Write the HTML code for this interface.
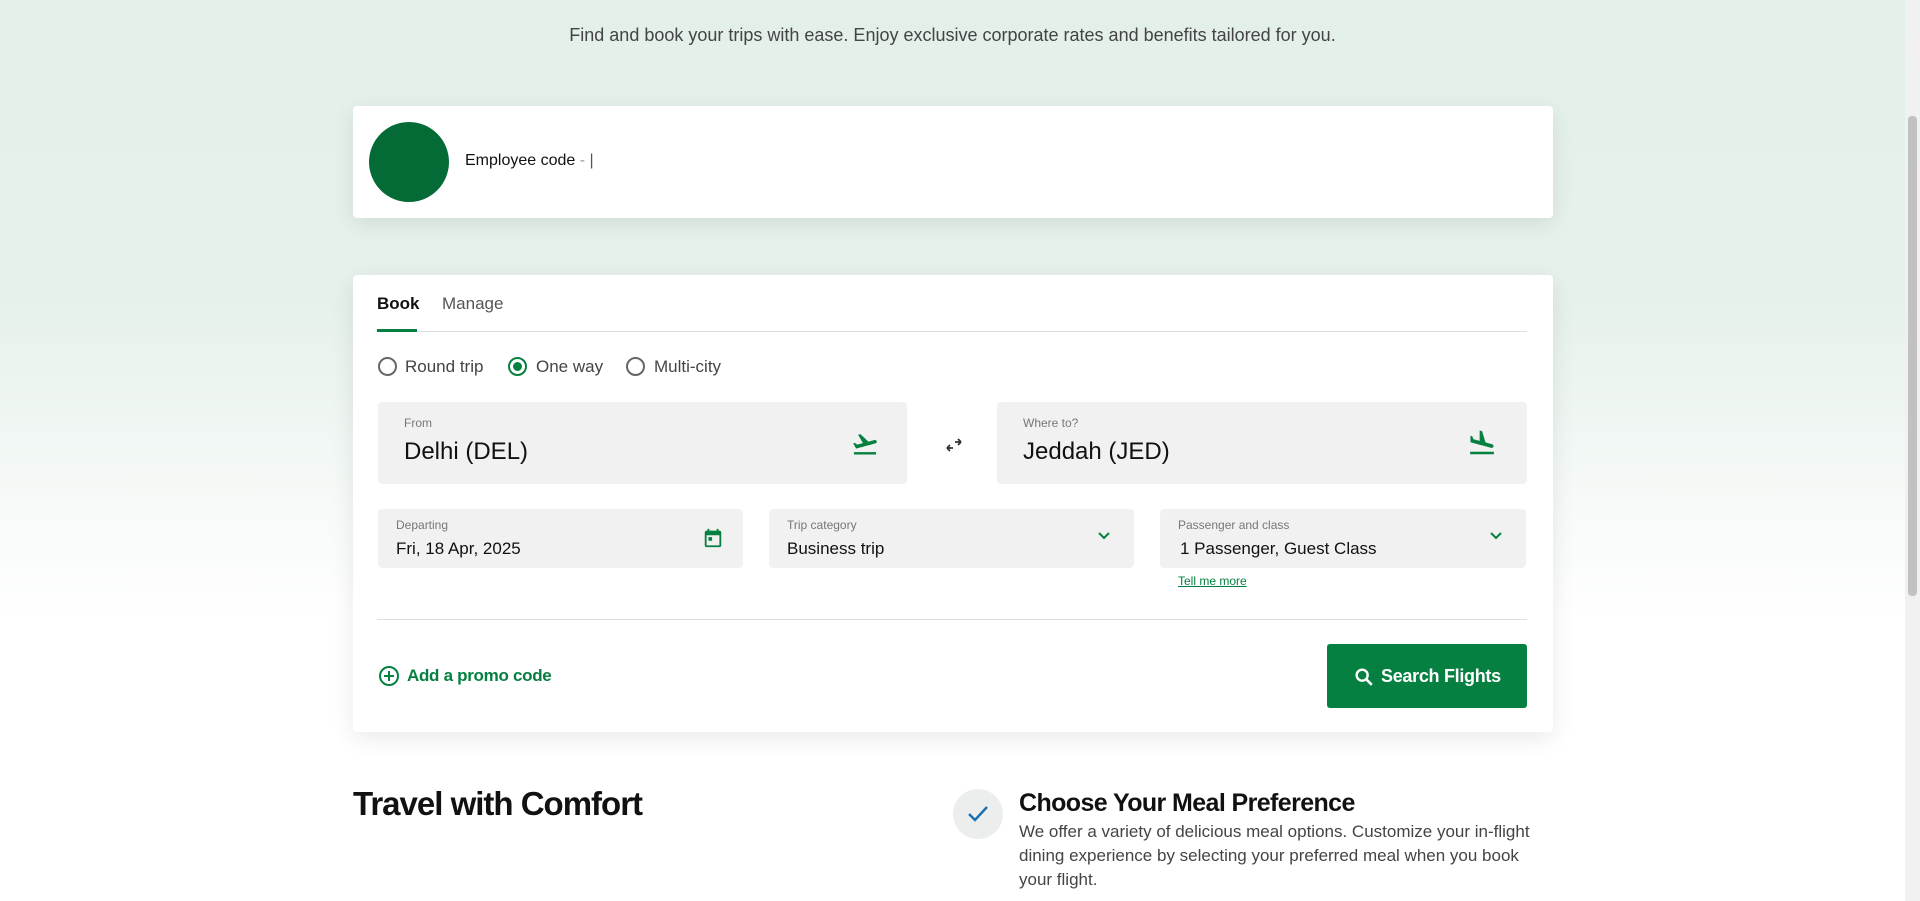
<!DOCTYPE html>
<html><head><meta charset="utf-8"><style>
*{box-sizing:border-box;margin:0;padding:0}
body{width:1920px;height:901px;overflow:hidden;font-family:"Liberation Sans",sans-serif;color:#111;background:linear-gradient(#e3f0e9 0px,#e6f1eb 300px,#fff 620px);position:relative}
.abs{position:absolute}
.card{position:absolute;background:#fff;border-radius:4px;box-shadow:0 6px 24px rgba(0,0,0,.09)}
.field{position:absolute;background:#f1f1f1;border-radius:4px}
.lbl{position:absolute;font-size:12px;color:#777}
.val{position:absolute;color:#111}
.radio{position:absolute;width:19px;height:19px;border:2px solid #666;border-radius:50%}
.sb{position:absolute;right:0;top:0;width:15px;height:901px;background:#f1f1f1}
</style></head><body>
<div class="abs" style="left:0;width:1905px;top:25px;text-align:center;font-size:18px;color:#444">Find and book your trips with ease. Enjoy exclusive corporate rates and benefits tailored for you.</div>

<div class="card" style="left:353px;top:106px;width:1200px;height:112px">
  <div class="abs" style="left:16px;top:16px;width:80px;height:80px;border-radius:50%;background:#046a36"></div>
  <div class="abs" style="left:112px;top:46px;font-size:16px">Employee code <span style="color:#999">- </span><span style="color:#555">|</span></div>
</div>

<div class="card" style="left:353px;top:275px;width:1200px;height:457px">
  <div class="abs" style="left:24px;top:19px;font-size:17px;font-weight:bold">Book</div>
  <div class="abs" style="left:89px;top:19px;font-size:17px;color:#555">Manage</div>
  <div class="abs" style="left:24px;top:56px;width:1150px;height:1px;background:#ddd"></div>
  <div class="abs" style="left:24px;top:54px;width:40px;height:3px;background:#058040"></div>

  <div class="radio" style="left:25px;top:82px"></div>
  <div class="abs" style="left:52px;top:82px;font-size:17px;color:#444">Round trip</div>
  <div class="radio" style="left:155px;top:82px;border-color:#058040"><div style="position:absolute;left:3px;top:3px;width:9px;height:9px;border-radius:50%;background:#058040"></div></div>
  <div class="abs" style="left:183px;top:82px;font-size:17px;color:#444">One way</div>
  <div class="radio" style="left:273px;top:82px"></div>
  <div class="abs" style="left:301px;top:82px;font-size:17px;color:#444">Multi-city</div>

  <div class="field" style="left:25px;top:127px;width:529px;height:82px">
    <div class="lbl" style="left:26px;top:14px">From</div>
    <div class="val" style="left:26px;top:36px;font-size:24px">Delhi (DEL)</div>
    <svg class="abs" style="left:472px;top:28px" width="30" height="28" viewBox="0 0 24 24"><path fill="#058040" d="M2.5 19h19v2h-19zm19.57-9.36c-.21-.8-1.04-1.28-1.84-1.06L14.92 10l-6.9-6.43-1.930.51 4.14 7.17-4.97 1.33-1.97-1.54-1.45.39 2.59 4.49s7.12-1.9 16.57-4.430c.81-.23 1.28-1.05 1.07-1.85z"/></svg>
  </div>
  <svg class="abs" style="left:591px;top:162px" width="20" height="16" viewBox="0 0 20 16"><path d="M3 11h6M3 11l3-3M3 11l3 3M17 5h-6M17 5l-3-3M17 5l-3 3" stroke="#333" stroke-width="1.8" fill="none"/></svg>
  <div class="field" style="left:644px;top:127px;width:530px;height:82px">
    <div class="lbl" style="left:26px;top:14px">Where to?</div>
    <div class="val" style="left:26px;top:36px;font-size:24px">Jeddah (JED)</div>
    <svg class="abs" style="left:470px;top:26px" width="30" height="30" viewBox="0 0 24 24"><path fill="#058040" d="M2.5 19h19v2h-19zm7.18-5.73 4.35 1.16 5.31 1.42c.8.21 1.62-.26 1.84-1.06.21-.8-.26-1.62-1.06-1.84l-5.31-1.42-2.76-9.02L10.12 2v8.28L5.15 8.95l-.93-2.32-1.45-.39v5.17l1.6.43 5.31 1.43z"/></svg>
  </div>

  <div class="field" style="left:25px;top:234px;width:365px;height:59px">
    <div class="lbl" style="left:18px;top:9px">Departing</div>
    <div class="val" style="left:18px;top:30px;font-size:17px">Fri, 18 Apr, 2025</div>
    <svg class="abs" style="left:324px;top:18px" width="22" height="22" viewBox="0 0 24 24"><path fill="#058040" d="M19 4h-1V2h-2v2H8V2H6v2H5c-1.1 0-2 .9-2 2v14c0 1.1.9 2 2 2h14c1.1 0 2-.9 2-2V6c0-1.1-.9-2-2-2zm0 16H5V9h14v11zM7 11h4v4H7z"/></svg>
  </div>
  <div class="field" style="left:416px;top:234px;width:365px;height:59px">
    <div class="lbl" style="left:18px;top:9px">Trip category</div>
    <div class="val" style="left:18px;top:30px;font-size:17px">Business trip</div>
    <svg class="abs" style="left:328px;top:22px" width="14" height="10" viewBox="0 0 14 10"><path d="M2 2l5 5 5-5" stroke="#058040" stroke-width="2" fill="none"/></svg>
  </div>
  <div class="field" style="left:807px;top:234px;width:366px;height:59px">
    <div class="lbl" style="left:18px;top:9px">Passenger and class</div>
    <div class="val" style="left:20px;top:30px;font-size:17px">1 Passenger, Guest Class</div>
    <svg class="abs" style="left:329px;top:22px" width="14" height="10" viewBox="0 0 14 10"><path d="M2 2l5 5 5-5" stroke="#058040" stroke-width="2" fill="none"/></svg>
  </div>
  <div class="abs" style="left:825px;top:299px;font-size:12px;color:#058040;text-decoration:underline">Tell me more</div>

  <div class="abs" style="left:24px;top:344px;width:1150px;height:1px;background:#ddd"></div>

  <svg class="abs" style="left:25px;top:390px" width="22" height="22" viewBox="0 0 22 22"><circle cx="11" cy="11" r="9" stroke="#058040" stroke-width="2" fill="none"/><path d="M11 6v10M6 11h10" stroke="#058040" stroke-width="2"/></svg>
  <div class="abs" style="left:54px;top:391px;font-size:17px;font-weight:bold;color:#058040;letter-spacing:-0.3px">Add a promo code</div>

  <div class="abs" style="left:974px;top:369px;width:200px;height:64px;background:#058040;border-radius:3px;color:#fff;font-size:18px;font-weight:bold;line-height:64px;padding-left:54px;letter-spacing:-0.3px">Search Flights</div>
  <svg class="abs" style="left:1000px;top:391px" width="22" height="22" viewBox="0 0 24 24"><circle cx="10" cy="10" r="6" stroke="#fff" stroke-width="2.6" fill="none"/><path d="M14.5 14.5l6 6" stroke="#fff" stroke-width="2.8"/></svg>
</div>

<div class="abs" style="left:353px;top:785px;font-size:33px;font-weight:bold;letter-spacing:-1px">Travel with Comfort</div>
<div class="abs" style="left:953px;top:789px;width:50px;height:50px;border-radius:50%;background:#eceeee"></div>
<svg class="abs" style="left:966px;top:804px" width="24" height="20" viewBox="0 0 24 20"><path d="M3 10l6 6L21 3" stroke="#1a6fb0" stroke-width="2.4" fill="none"/></svg>
<div class="abs" style="left:1019px;top:789px;font-size:25px;font-weight:bold;letter-spacing:-0.6px">Choose Your Meal Preference</div>
<div class="abs" style="left:1019px;top:820px;width:530px;font-size:17px;line-height:24px;color:#444">We offer a variety of delicious meal options. Customize your in-flight dining experience by selecting your preferred meal when you book your flight.</div>

<div class="sb"><div style="position:absolute;left:3px;top:116px;width:9px;height:480px;background:#c1c1c1;border-radius:4px"></div></div>
</body></html>
